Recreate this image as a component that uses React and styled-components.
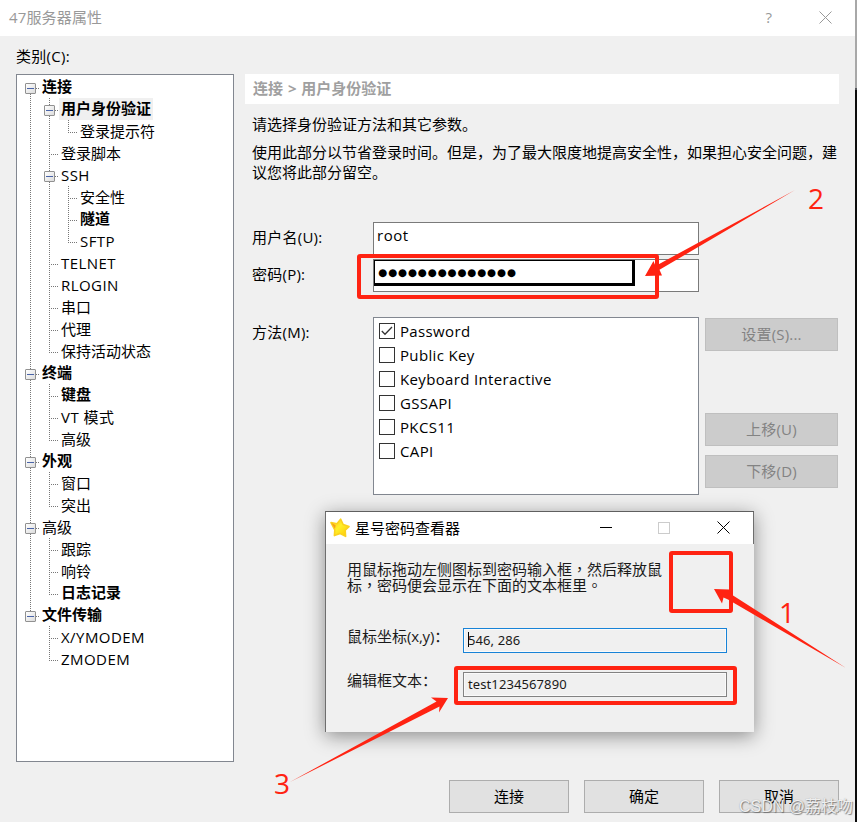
import { Fragment } from "react";
import styled, { createGlobalStyle } from "styled-components";

const TREE = [
    { label: "连接", bold: true, children: [
        { label: "用户身份验证", bold: true, selected: true, children: [{ label: "登录提示符" }] },
        { label: "登录脚本" },
        { label: "SSH", children: [
            { label: "安全性" },
            { label: "隧道", bold: true },
            { label: "SFTP" },
        ] },
        { label: "TELNET" },
        { label: "RLOGIN" },
        { label: "串口" },
        { label: "代理" },
        { label: "保持活动状态" },
    ] },
    { label: "终端", bold: true, children: [
        { label: "键盘", bold: true },
        { label: "VT 模式" },
        { label: "高级" },
    ] },
    { label: "外观", bold: true, children: [{ label: "窗口" }, { label: "突出" }] },
    { label: "高级", children: [
        { label: "跟踪" },
        { label: "响铃" },
        { label: "日志记录", bold: true },
    ] },
    { label: "文件传输", bold: true, children: [{ label: "X/YMODEM" }, { label: "ZMODEM" }] },
];

const METHODS = [
    { name: "Password", checked: true },
    { name: "Public Key" },
    { name: "Keyboard Interactive" },
    { name: "GSSAPI" },
    { name: "PKCS11" },
    { name: "CAPI" },
];

// guides: for each ancestor level, whether its vertical line goes on
function Branch({ nodes, guides = [] }) {
    return nodes.map((node, i) => {
        const last = i === nodes.length - 1;
        const first = guides.length === 0 && i === 0;
        return (
            <Fragment key={node.label}>
                <TreeRow>
                    {guides.map((on, g) => <Guide key={g} $up={on} $down={on} />)}
                    <Guide $up={!first} $down={!last} $across>
                        {node.children && <Toggle />}
                    </Guide>
                    <TreeLabel $bold={node.bold} $selected={node.selected} $latin={/^[A-Z]/.test(node.label)}>
                        {node.label}
                    </TreeLabel>
                </TreeRow>
                {node.children && <Branch nodes={node.children} guides={[...guides, !last]} />}
            </Fragment>
        );
    });
}

function CloseIcon({ size = 13 }) {
    return (
        <svg width={size} height={size} viewBox="0 0 13 13" fill="none" stroke="currentColor">
            <path d="M0.5 0.5 L12.5 12.5 M12.5 0.5 L0.5 12.5" />
        </svg>
    );
}

function StarIcon() {
    return (
        <svg width="20" height="20" viewBox="0 0 20 20">
            <defs>
                <linearGradient id="star" x1="0" y1="0" x2="1" y2="1">
                    <stop offset="0" stopColor="#ffb81c" />
                    <stop offset="0.45" stopColor="#fff02a" />
                    <stop offset="1" stopColor="#ffc400" />
                </linearGradient>
            </defs>
            <path
                d="M10.6 1.2 L13.2 6.6 L19 8.6 L15.2 12.2 L15.6 18.4 L10.2 15.6 L4.4 17.6 L4.8 12 L1 4.6 L7 5.8 Z"
                fill="url(#star)" stroke="#fbd21f" strokeWidth="1.6" strokeLinejoin="round"
            />
            <path d="M1.2 4.8 L5.6 7.2 L5 10.8 Z" fill="#f7a01b" />
        </svg>
    );
}

function PasswordViewer() {
    return (
        <Viewer>
            <ViewerTitle>
                <StarIcon />
                <ViewerName>星号密码查看器</ViewerName>
                <MinimizeBox />
                <MaximizeBox />
                <CloseIcon />
            </ViewerTitle>
            <ViewerBody>
                <Hint>
                    用鼠标拖动左侧图标到密码输入框<Mark>，</Mark>然后释放鼠<br />
                    标<Mark>，</Mark>密码便会显示在下面的文本框里<Mark>。</Mark>
                </Hint>
                <ViewerRow>
                    <ViewerLabel>鼠标坐标<Coord>(x,y)</Coord>：</ViewerLabel>
                    <ViewerInput $focused><Caret />546, 286</ViewerInput>
                </ViewerRow>
                <ViewerRow>
                    <ViewerLabel>编辑框文本：</ViewerLabel>
                    <ViewerInput>test1234567890</ViewerInput>
                </ViewerRow>
            </ViewerBody>
        </Viewer>
    );
}

function Annotations() {
    return (
        <>
            <RedBox $x={357} $y={254} $w={302} $h={45} />
            <RedBox $x={669} $y={551} $w={64} $h={62} />
            <RedBox $x={454} $y={666} $w={283} $h={39} />
            <Arrows width="857" height="822" viewBox="0 0 857 822" fill="#ff2312">
                <path d="M795 190 L659.5 269.8 L662 275.5 L645 276 L653.5 261 L655.5 266 Z" />
                <path d="M846 668 L731.5 594.5 L729 589.5 L714 589 L722 603.5 L723.5 597.5 L728 599.5 Z" />
                <path d="M290 782 L439.5 706.5 L439 712.5 L448 698 L431 697.5 L436.5 701.5 Z" />
            </Arrows>
            <StepNumber $x={808} $y={178}>2</StepNumber>
            <StepNumber $x={779} $y={592}>1</StepNumber>
            <StepNumber $x={274} $y={763}>3</StepNumber>
        </>
    );
}

function App() {
    return (
        <Screen>
            <GlobalStyle />
            <Dialog>
                <TitleBar>
                    <Title>47服务器属性</Title>
                    <Help>?</Help>
                    <CloseIcon />
                </TitleBar>
                <Content>
                    <Sidebar>
                        <Category>类别(C):</Category>
                        <Tree><Branch nodes={TREE} /></Tree>
                    </Sidebar>
                    <Main>
                        <Breadcrumb>连接 &gt; 用户身份验证</Breadcrumb>
                        <Intro>请选择身份验证方法和其它参数。</Intro>
                        <Description>
                            使用此部分以节省登录时间。但是，为了最大限度地提高安全性，如果担心安全问题，建议您将此部分留空。
                        </Description>
                        <Form>
                            <FieldLabel>用户名(U):</FieldLabel>
                            <Input>root</Input>
                            <FieldLabel>密码(P):</FieldLabel>
                            <Input $flush><Captured>{"●".repeat(14)}</Captured></Input>
                        </Form>
                        <MethodArea>
                            <FieldLabel>方法(M):</FieldLabel>
                            <MethodList>
                                {METHODS.map((m) => (
                                    <Method key={m.name}>
                                        <Checkbox>
                                            {m.checked && (
                                                <svg width="14" height="14" viewBox="0 0 14 14" fill="none" stroke="#333" strokeWidth="1.3">
                                                    <path d="M1.8 7 L5 10.2 L12 3" />
                                                </svg>
                                            )}
                                        </Checkbox>
                                        {m.name}
                                    </Method>
                                ))}
                            </MethodList>
                            <SideButtons>
                                <SideButton $below={62}>设置(S)...</SideButton>
                                <SideButton $below={9}>上移(U)</SideButton>
                                <SideButton>下移(D)</SideButton>
                            </SideButtons>
                        </MethodArea>
                    </Main>
                </Content>
                <Footer>
                    <Button>连接</Button>
                    <Button>确定</Button>
                    <Button>取消</Button>
                </Footer>
            </Dialog>
            <Backdrop />
            <PasswordViewer />
            <Annotations />
            <Watermark>CSDN @荔枝吻</Watermark>
        </Screen>
    );
}

export default App

const GlobalStyle = createGlobalStyle`
    * {
        box-sizing: border-box;
    }
    body {
        margin: 0;
        font-family: "Open Sans", "Noto Sans CJK SC", sans-serif;
        font-size: 15px;
        line-height: 20px;
        color: #000;
    }
    svg {
        flex: none;
    }
`

const Screen = styled.div`
    position: relative;
    display: flex;
    width: 857px;
    height: 822px;
    overflow: hidden;
`

const Dialog = styled.div`
    display: flex;
    flex-direction: column;
    width: 855px;
    background: #f0f0f0;
`

const Backdrop = styled.div`
    width: 2px;
    background: linear-gradient(#a8a8a8 0 88px, #55575c 88px 90px, #0c0c0c 90px);
`

const TitleBar = styled.div`
    display: flex;
    align-items: center;
    height: 36px;
    padding: 0 23px 2px 9px;
    background: #fff;
    color: #999;
`

const Title = styled.div`
    flex: 1;
    letter-spacing: 0.15px;
`

const Help = styled.div`
    margin-right: 47px;
`

const Content = styled.div`
    display: flex;
    height: 726px;
    padding-left: 16px;
`

const Sidebar = styled.div`
    width: 218px;
    margin-right: 11px;
`

const Category = styled.div`
    height: 38px;
    padding-top: 10px;
    letter-spacing: 0.3px;
`

const Tree = styled.div`
    height: 688px;
    padding: 1px 0 0 4px;
    background: #fff;
    border: 1px solid #828790;
`

const TreeRow = styled.div`
    display: flex;
    height: 22px;
`

const dots = (dir) => `repeating-linear-gradient(${dir}, #777 0 1px, transparent 1px 2px)`;

const Guide = styled.div`
    display: flex;
    align-items: center;
    justify-content: center;
    width: 19px;
    height: 22px;
    padding-top: 3px;
    background-repeat: no-repeat;
    background-image: ${dots("to bottom")}, ${dots("to bottom")}, ${dots("to right")};
    background-position: 9px 0, 9px 12px, 9px 12px;
    background-size:
        ${(p) => (p.$up ? "1px 12px" : "0 0")},
        ${(p) => (p.$down ? "1px 10px" : "0 0")},
        ${(p) => (p.$across ? "9px 1px" : "0 0")};
`

const Toggle = styled.div`
    width: 11px;
    height: 11px;
    border: 1px solid #919191;
    border-radius: 1px;
    background:
        linear-gradient(#4a64a8, #4a64a8) center / 7px 1px no-repeat,
        linear-gradient(135deg, #fff, #dcdcdc);
`

const TreeLabel = styled.div`
    height: 22px;
    padding: 0 2px;
    line-height: ${(p) => (p.$bold ? 21 : 23)}px;
    font-weight: ${(p) => (p.$bold ? 700 : 400)};
    letter-spacing: ${(p) => (p.$latin ? "0.45px" : "normal")};
    background: ${(p) => (p.$selected ? "#f0f0f0" : "none")};
    white-space: pre;
`

const Main = styled.div`
    width: 594px;
    padding-top: 38px;
`

const Breadcrumb = styled.div`
    height: 30px;
    padding-left: 8px;
    background: #fff;
    color: #a0a0a0;
    font-weight: 700;
    line-height: 29px;
    word-spacing: 1px;
`

const Intro = styled.div`
    margin: 10px 0 8px 7px;
`

const Description = styled.div`
    width: 587px;
    margin-left: 7px;
    white-space: normal;
    word-break: break-all;
`

const Form = styled.div`
    display: grid;
    grid-template-columns: 121px 326px;
    grid-auto-rows: 33px;
    row-gap: 4px;
    margin: 40px 0 25px 7px;
`

const FieldLabel = styled.div`
    width: 121px;
    padding-top: 5px;
    letter-spacing: 0.25px;
`

const Input = styled.div`
    padding: ${(p) => (p.$flush ? "0" : "2px 3px")};
    background: #fff;
    border: 1px solid #7a7a7a;
    letter-spacing: 0.5px;
`

const Captured = styled.div`
    width: 261px;
    height: 26px;
    padding-left: 3px;
    border: solid #000;
    border-width: 1px 3px 3px 1px;
    font-family: "DejaVu Sans", sans-serif;
    font-size: 10.4px;
    line-height: 23px;
    letter-spacing: 0.83px;
`

const MethodArea = styled.div`
    display: flex;
    margin-left: 7px;
`

const MethodList = styled.div`
    width: 326px;
    height: 178px;
    margin-right: 6px;
    padding: 1px 5px;
    background: #fff;
    border: 1px solid #828790;
    letter-spacing: 0.35px;
`

const Method = styled.div`
    display: flex;
    align-items: center;
    height: 24px;
`

const Checkbox = styled.div`
    display: flex;
    width: 16px;
    height: 16px;
    margin-right: 5px;
    border: 1px solid #333;
`

const SideButtons = styled.div`
    padding-top: 1px;
`

const SideButton = styled.div`
    width: 133px;
    height: 33px;
    margin-bottom: ${(p) => p.$below || 0}px;
    background: #ccc;
    border: 1px solid #bfbfbf;
    color: #838383;
    line-height: 31px;
    letter-spacing: 0.2px;
    text-align: center;
`

const Footer = styled.div`
    display: flex;
    justify-content: flex-end;
    gap: 15px;
    padding: 18px 16px 0 0;
`

const Button = styled.div`
    width: 120px;
    height: 33px;
    background: #e1e1e1;
    border: 1px solid #adadad;
    line-height: 31px;
    text-align: center;
`

const Viewer = styled.div`
    position: absolute;
    left: 325px;
    top: 511px;
    width: 429px;
    height: 221px;
    background: #f0f0f0;
    border-left: 1px solid #6e6e6e;
    border-top: 1px solid #5f5f5f;
    box-shadow: 0 4px 18px rgba(0, 0, 0, 0.42);
`

const ViewerTitle = styled.div`
    display: flex;
    align-items: center;
    height: 32px;
    padding: 0 23px 1px 4px;
    background: #fff;
    border-right: 1px solid #6e6e6e;
`

const ViewerName = styled.div`
    flex: 1;
    margin-left: 5px;
`

const MinimizeBox = styled.div`
    width: 12px;
    height: 1px;
    margin-right: 46px;
    background: #000;
`

const MaximizeBox = styled.div`
    width: 12px;
    height: 12px;
    margin-right: 47px;
    border: 1px solid #ccc;
`

const ViewerBody = styled.div`
    padding: 17px 0 0 21px;
    color: #1a1a1a;
`

const Hint = styled.div`
    margin-bottom: 35px;
    line-height: 16px;
    white-space: nowrap;
`

const Mark = styled.span`
    font-family: "Noto Sans CJK TC", sans-serif;
`

const ViewerRow = styled.div`
    display: flex;
    height: 25px;
    margin-bottom: 19px;
`

const ViewerLabel = styled.div`
    width: 116px;
    line-height: 17px;
    white-space: nowrap;
`

const Coord = styled.span`
    letter-spacing: -0.2px;
`

const ViewerInput = styled.div`
    display: flex;
    width: 264px;
    height: 25px;
    padding-left: 4px;
    border: 1px solid ${(p) => (p.$focused ? "#1883d7" : "#828282")};
    box-shadow: inset 0 0 0 1px #fafafa;
    font-family: "Noto Sans", sans-serif;
    font-size: 13px;
    line-height: 23px;
    letter-spacing: 0.1px;
`

const Caret = styled.span`
    width: 1px;
    height: 15px;
    margin: 3px -1px 0 0;
    background: #000;
`

const RedBox = styled.div`
    position: absolute;
    left: ${(p) => p.$x}px;
    top: ${(p) => p.$y}px;
    width: ${(p) => p.$w}px;
    height: ${(p) => p.$h}px;
    border: 4px solid #ff2312;
    border-radius: 3px;
`

const Arrows = styled.svg`
    position: absolute;
    left: 0;
    top: 0;
`

const StepNumber = styled.div`
    position: absolute;
    left: ${(p) => p.$x}px;
    top: ${(p) => p.$y}px;
    color: #ff2312;
    font-size: 28px;
    line-height: 40px;
`

const Watermark = styled.div`
    position: absolute;
    right: 4px;
    bottom: 5px;
    color: rgba(255, 255, 255, 0.85);
    font-family: "Liberation Sans", "Noto Sans CJK SC", sans-serif;
    font-size: 16px;
    text-shadow: 1px 1px 1px rgba(90, 90, 90, 0.7), 0 0 1px rgba(120, 120, 120, 0.6);
    white-space: nowrap;
`
